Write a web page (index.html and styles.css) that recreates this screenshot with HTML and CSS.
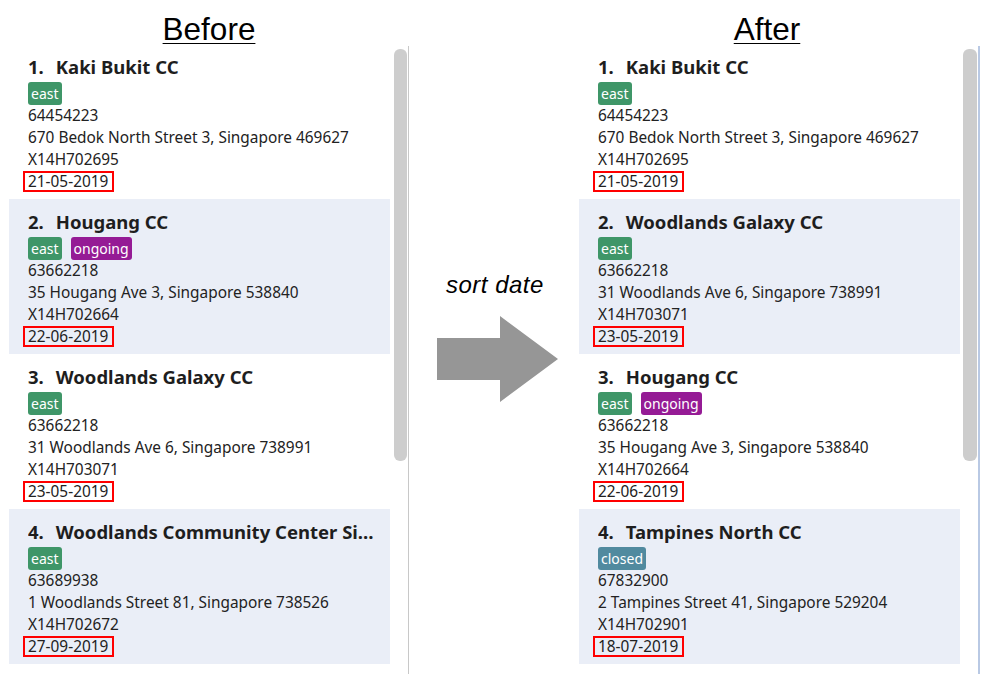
FILE: index.html
```html
<!DOCTYPE html>
<html lang="en">
<head>
<meta charset="utf-8">
<title>Sort date</title>
<link rel="stylesheet" href="styles.css">
</head>
<body>
<div class="page">
  <section class="panel panel-before">
    <h1 class="heading heading-before">Before</h1>
    <div class="panel-body">
      <div class="list">
        <div class="card">
          <div class="title"><span class="num">1.</span>Kaki Bukit CC</div>
          <div class="tags"><span class="tag tag-east">east</span></div>
          <div class="line">64454223</div>
          <div class="line">670 Bedok North Street 3, Singapore 469627</div>
          <div class="line">X14H702695</div>
          <div class="line"><span class="date">21-05-2019</span></div>
        </div>
        <div class="card card-alt">
          <div class="title"><span class="num">2.</span>Hougang CC</div>
          <div class="tags"><span class="tag tag-east">east</span><span class="tag tag-ongoing">ongoing</span></div>
          <div class="line">63662218</div>
          <div class="line">35 Hougang Ave 3, Singapore 538840</div>
          <div class="line">X14H702664</div>
          <div class="line"><span class="date">22-06-2019</span></div>
        </div>
        <div class="card">
          <div class="title"><span class="num">3.</span>Woodlands Galaxy CC</div>
          <div class="tags"><span class="tag tag-east">east</span></div>
          <div class="line">63662218</div>
          <div class="line">31 Woodlands Ave 6, Singapore 738991</div>
          <div class="line">X14H703071</div>
          <div class="line"><span class="date">23-05-2019</span></div>
        </div>
        <div class="card card-alt">
          <div class="title title-long"><span class="num">4.</span>Woodlands Community Center Singapore</div>
          <div class="tags"><span class="tag tag-east">east</span></div>
          <div class="line">63689938</div>
          <div class="line">1 Woodlands Street 81, Singapore 738526</div>
          <div class="line">X14H702672</div>
          <div class="line"><span class="date">27-09-2019</span></div>
        </div>
      </div>
      <div class="track track-before"><div class="thumb"></div></div>
    </div>
  </section>

  <section class="middle">
    <div class="action">sort date</div>
    <svg class="arrow" width="122" height="87" viewBox="0 0 122 87" aria-hidden="true">
      <polygon points="0,22 63,22 63,0 121,43 63,86 63,64 0,64" fill="#969696"/>
    </svg>
  </section>

  <section class="panel panel-after">
    <h1 class="heading heading-after">After</h1>
    <div class="panel-body">
      <div class="list">
        <div class="card">
          <div class="title"><span class="num">1.</span>Kaki Bukit CC</div>
          <div class="tags"><span class="tag tag-east">east</span></div>
          <div class="line">64454223</div>
          <div class="line">670 Bedok North Street 3, Singapore 469627</div>
          <div class="line">X14H702695</div>
          <div class="line"><span class="date">21-05-2019</span></div>
        </div>
        <div class="card card-alt">
          <div class="title"><span class="num">2.</span>Woodlands Galaxy CC</div>
          <div class="tags"><span class="tag tag-east">east</span></div>
          <div class="line">63662218</div>
          <div class="line">31 Woodlands Ave 6, Singapore 738991</div>
          <div class="line">X14H703071</div>
          <div class="line"><span class="date">23-05-2019</span></div>
        </div>
        <div class="card">
          <div class="title"><span class="num">3.</span>Hougang CC</div>
          <div class="tags"><span class="tag tag-east">east</span><span class="tag tag-ongoing">ongoing</span></div>
          <div class="line">63662218</div>
          <div class="line">35 Hougang Ave 3, Singapore 538840</div>
          <div class="line">X14H702664</div>
          <div class="line"><span class="date">22-06-2019</span></div>
        </div>
        <div class="card card-alt">
          <div class="title"><span class="num">4.</span>Tampines North CC</div>
          <div class="tags"><span class="tag tag-closed">closed</span></div>
          <div class="line">67832900</div>
          <div class="line">2 Tampines Street 41, Singapore 529204</div>
          <div class="line">X14H702901</div>
          <div class="line"><span class="date">18-07-2019</span></div>
        </div>
      </div>
      <div class="track track-after"><div class="thumb"></div></div>
    </div>
  </section>
</div>
</body>
</html>
```

FILE: styles.css
```css
html, body {
  margin: 0;
  padding: 0;
  height: 674px;
  overflow: hidden;
  background: #ffffff;
}

.page {
  display: flex;
  width: 981px;
  height: 674px;
  font-family: "Noto Sans", "Open Sans", sans-serif;
  color: #222222;
}

.panel {
  display: flex;
  flex-direction: column;
}

.panel-before {
  width: 409px;
  padding-left: 9px;
  box-sizing: border-box;
}

.panel-after {
  width: 402px;
}

.heading {
  margin: 0;
  height: 30px;
  padding-top: 14px;
  line-height: 30px;
  font-family: "Liberation Sans", Arial, sans-serif;
  font-size: 31.5px;
  font-weight: normal;
  color: #000000;
  text-align: center;
  text-decoration: underline;
  text-decoration-thickness: 2px;
  text-underline-offset: 3px;
}

.heading-before {
  padding-left: 0;
}

.heading-after {
  padding-right: 26px;
}

.panel-body {
  display: flex;
  flex: 1;
  min-height: 0;
}

.list {
  width: 381px;
  display: flex;
  flex-direction: column;
}

.card {
  height: 155px;
  box-sizing: border-box;
  padding: 10px 12px 6px 19px;
  background: #ffffff;
}

.card-alt {
  background: #eaeef7;
}

.title {
  height: 26px;
  line-height: 26px;
  font-size: 18.5px;
  font-weight: 700;
  color: #1e1e1e;
  white-space: nowrap;
  overflow: hidden;
  text-overflow: ellipsis;
}

.num {
  margin-right: 12px;
}

.tags {
  display: flex;
  gap: 9px;
  margin-top: 2px;
  height: 23px;
}

.tag {
  display: inline-block;
  height: 23px;
  line-height: 23px;
  padding: 0 3px;
  border-radius: 3px;
  font-size: 14px;
  color: #ffffff;
}

.tag-east {
  background: #3f9668;
}

.tag-ongoing {
  background: #951b95;
}

.tag-closed {
  background: #518a9f;
}

.line {
  height: 22px;
  line-height: 22px;
  font-size: 15.4px;
}

.date {
  display: inline-block;
  height: 17px;
  line-height: 17px;
  padding: 0 4px 0 3px;
  margin-left: -5px;
  border: 2px solid #ff0000;
}

.track {
  margin-top: 2px;
  padding-top: 3px;
  box-sizing: border-box;
}

.track-before {
  width: 19px;
  padding-left: 4px;
  padding-right: 1px;
  border-right: 1px solid #c8c8c8;
}

.track-after {
  width: 20px;
  padding-left: 3px;
  padding-right: 1px;
  border-right: 2px solid #b9c9e4;
}

.thumb {
  width: 100%;
  height: 412px;
  border-radius: 6px;
  background: #cdcdcd;
}

.middle {
  width: 170px;
  padding-top: 272px;
  padding-left: 28px;
  box-sizing: border-box;
}

.action {
  margin-left: 9px;
  height: 26px;
  line-height: 26px;
  font-family: "Liberation Sans", Arial, sans-serif;
  font-style: italic;
  font-size: 24px;
  letter-spacing: 0.5px;
  color: #000000;
}

.arrow {
  display: block;
  margin-top: 18px;
}
```
